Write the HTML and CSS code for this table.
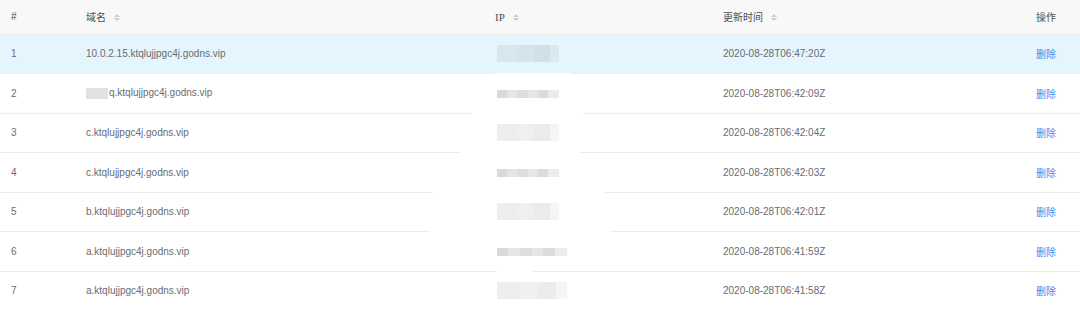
FILE: index.html
```html
<!DOCTYPE html>
<html lang="zh-CN">
  <head>
    <meta charset="UTF-8" />
    <title>域名列表</title>
    <link rel="stylesheet" href="styles.css">
  </head>
  <body>
    <table class="grid">
      <colgroup>
        <col class="c-idx" />
        <col class="c-domain" />
        <col class="c-ip" />
        <col class="c-time" />
        <col class="c-op" />
      </colgroup>
      <thead>
        <tr>
          <th>#</th>
          <th>域名<span class="sort"><i class="up"></i><i class="down"></i></span></th>
          <th><span class="ip-head">IP</span><span class="sort"><i class="up"></i><i class="down"></i></span></th>
          <th>更新时间<span class="sort"><i class="up"></i><i class="down"></i></span></th>
          <th>操作</th>
        </tr>
      </thead>
      <tbody>
        <tr class="hover">
          <td>1</td>
          <td>10.0.2.15.ktqlujjpgc4j.godns.vip</td>
          <td class="ip g1"><span class="mask tall"></span></td>
          <td>2020-08-28T06:47:20Z</td>
          <td><a href="#">删除</a></td>
        </tr>
        <tr>
          <td>2</td>
          <td><span class="mask-name"></span>q.ktqlujjpgc4j.godns.vip</td>
          <td class="ip g2"><span class="mask"></span></td>
          <td>2020-08-28T06:42:09Z</td>
          <td><a href="#">删除</a></td>
        </tr>
        <tr>
          <td>3</td>
          <td>c.ktqlujjpgc4j.godns.vip</td>
          <td class="ip g3"><span class="mask tall light"></span></td>
          <td>2020-08-28T06:42:04Z</td>
          <td><a href="#">删除</a></td>
        </tr>
        <tr>
          <td>4</td>
          <td>c.ktqlujjpgc4j.godns.vip</td>
          <td class="ip g4"><span class="mask"></span></td>
          <td>2020-08-28T06:42:03Z</td>
          <td><a href="#">删除</a></td>
        </tr>
        <tr>
          <td>5</td>
          <td>b.ktqlujjpgc4j.godns.vip</td>
          <td class="ip g5"><span class="mask tall light"></span></td>
          <td>2020-08-28T06:42:01Z</td>
          <td><a href="#">删除</a></td>
        </tr>
        <tr>
          <td>6</td>
          <td>a.ktqlujjpgc4j.godns.vip</td>
          <td class="ip g6"><span class="mask wide"></span></td>
          <td>2020-08-28T06:41:59Z</td>
          <td><a href="#">删除</a></td>
        </tr>
        <tr>
          <td>7</td>
          <td>a.ktqlujjpgc4j.godns.vip</td>
          <td class="ip"><span class="mask tall wide light"></span></td>
          <td>2020-08-28T06:41:58Z</td>
          <td><a href="#">删除</a></td>
        </tr>
      </tbody>
    </table>
  </body>
</html>
```

FILE: styles.css
```css
* {
  margin: 0;
  padding: 0;
  box-sizing: border-box;
}
body {
  background: #fff;
  font-family: "Liberation Sans", "Noto Sans CJK SC", sans-serif;
  font-size: 10px;
}

/* TABLE */
.grid {
  width: 1080px;
  border-collapse: collapse;
  table-layout: fixed;
}
.c-idx {
  width: 75px;
}
.c-domain {
  width: 409px;
}
.c-ip {
  width: 228px;
}
.c-time {
  width: 313px;
}
.grid th,
.grid td {
  padding: 0 0 0 11px;
  text-align: left;
  white-space: nowrap;
  vertical-align: middle;
}
.grid th {
  height: 34px;
  background: #f8f8f9;
  color: #4a4f5a;
  font-weight: normal;
  border-bottom: 1px solid #e8eaec;
}
.ip-head {
  font-family: "Liberation Serif", serif;
  font-size: 11px;
}
.grid td {
  height: 39.5px;
  color: #686c74;
  border-bottom: 1px solid #ebedef;
}
.grid tr.hover td {
  background: #e5f5fd;
}
.grid td a {
  color: #3c8ff0;
  text-decoration: none;
}

/* sort arrows */
.sort {
  display: inline-flex;
  flex-direction: column;
  gap: 1px;
  margin-left: 8px;
  vertical-align: middle;
  position: relative;
  top: -1px;
}
.sort i {
  width: 0;
  height: 0;
  border-left: 3px solid transparent;
  border-right: 3px solid transparent;
}
.sort .up {
  border-bottom: 3px solid #c9ccd2;
}
.sort .down {
  border-top: 3px solid #c9ccd2;
}

/* blurred values */
.grid td.ip {
  position: relative;
}
.grid td.ip::after {
  content: "";
  position: absolute;
  bottom: -1px;
  height: 1px;
  background: #fff;
}
.g1::after {
  left: 11px;
  width: 75px;
}
.g2::after {
  left: -12px;
  width: 111px;
}
.g3::after {
  left: -24px;
  width: 120px;
}
.g4::after {
  left: -51px;
  width: 172px;
}
.g5::after {
  left: -54px;
  width: 180px;
}
.g6::after {
  left: 13px;
  width: 36px;
}
.mask {
  display: inline-block;
  width: 62px;
  height: 8px;
  margin-left: 2px;
  vertical-align: middle;
  background: linear-gradient(
    90deg,
    #d9dadd 0 16%,
    #e5e5e7 16% 33%,
    #dedcdc 33% 50%,
    #e6e6e8 50% 66%,
    #dcdcdf 66% 83%,
    #ebeced 83% 100%
  );
}
.mask.tall {
  height: 17px;
  background: linear-gradient(
    90deg,
    #eaeced 0 30%,
    #e6e9eb 30% 60%,
    #e2e6e9 60% 85%,
    #ebeef0 85% 100%
  );
}
.hover .mask.tall {
  background: linear-gradient(
    90deg,
    #d8e6ee 0 30%,
    #d6e3ec 30% 60%,
    #d0dfe8 60% 85%,
    #dce8ef 85% 100%
  );
}
.mask.light {
  background: linear-gradient(
    90deg,
    #ededee 0 30%,
    #f0efef 30% 60%,
    #ebebeb 60% 85%,
    #f5f5f5 85% 100%
  );
}
.mask.wide {
  width: 70px;
}
.mask-name {
  display: inline-block;
  width: 22px;
  height: 11px;
  margin-right: 1px;
  vertical-align: middle;
  background: #e2e2e3;
}
```
